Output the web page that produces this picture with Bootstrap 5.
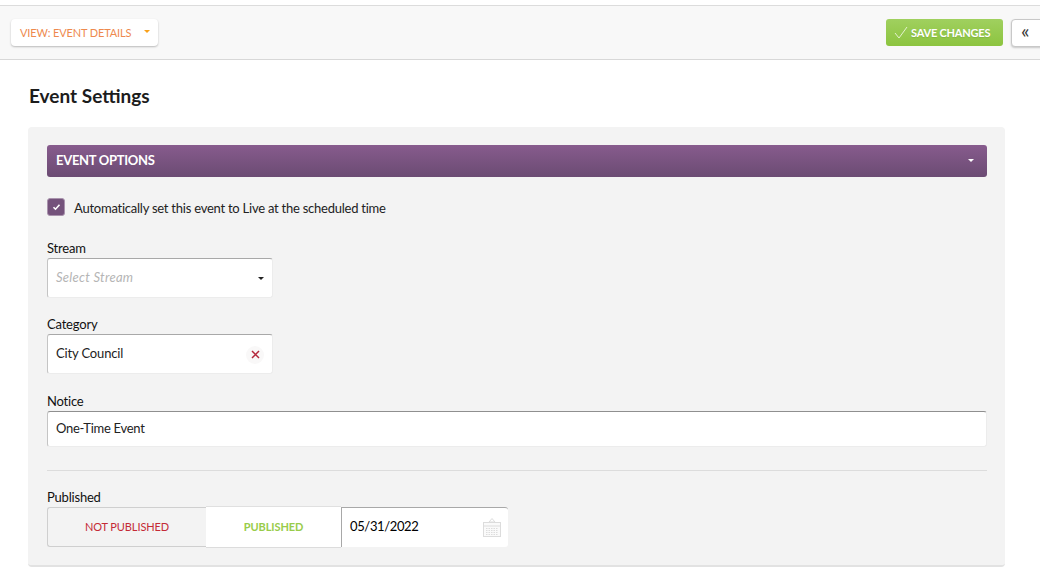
<!DOCTYPE html>
<html lang="en">
<head>
  <meta charset="UTF-8" />
  <meta name="viewport" content="width=device-width, initial-scale=1.0" />
  <title>Event Settings</title>
  <link rel="stylesheet" href="https://cdn.jsdelivr.net/npm/bootstrap@5.3.3/dist/css/bootstrap.min.css" />
  <style>
    body { font-family: Lato, "Liberation Sans", sans-serif; font-size: 13px; letter-spacing: -.2px; color: #222; background: #fff; overflow: hidden; }

    /* toolbar */
    .top-bar { margin-top: 5px; height: 55px; background: #f8f8f8; border-top: 1px solid #dcdcdc; border-bottom: 1px solid #d8d8d8; padding-left: 11px; overflow: hidden; white-space: nowrap; }
    .view-btn { width: 147px; height: 27px; background: #fff; border-radius: 4px; box-shadow: 0 1px 2px rgba(0,0,0,.25); color: #ee8a4e; font-size: 11px; letter-spacing: -.13px; padding: 2px 9px 0; }
    .caret-down { width: 0; height: 0; border-left: 3.5px solid transparent; border-right: 3.5px solid transparent; border-top: 3.5px solid #222; }
    .view-btn .caret-down { border-top-color: #f9a11b; margin-top: -4px; margin-right: -1px; }
    .save-btn { width: 117px; height: 27px; background: linear-gradient(#a0d05f, #8cc43f); border-radius: 3px; color: #fff; font-size: 11px; font-weight: 700; letter-spacing: -.2px; padding: 2px 8px 0; text-shadow: 0 1px 1px rgba(0,0,0,.1); }
    .save-btn svg { margin-top: -2px; margin-right: 3px !important; }
    .collapse-btn { width: 40px; height: 28px; margin-left: 8px; margin-right: -11px; flex-shrink: 0; background: #fff; border: 1px solid #c8c8c8; border-radius: 4px; box-shadow: 0 1px 2px rgba(0,0,0,.2); padding: 0 0 5px 9px; color: #333; font-size: 20px; line-height: 1; }

    /* content */
    .page-title { font-size: 19px; font-weight: 700; color: #1c1c1c; letter-spacing: 0; margin: 0; padding: 23px 0 0 29px; line-height: 25px; height: 67px; }
    .settings-box { margin-left: 28px; width: 977px; height: 440px; background: #f3f3f3; border-radius: 4px; border-bottom: 2px solid #e2e2e2; padding: 18px 18px 0 19px; }
    .options-head { height: 32px; background: linear-gradient(#875b8d, #6b4b73); border-radius: 3px; color: #fff; font-size: 13px; font-weight: 700; letter-spacing: -.3px; padding: 0 13px 0 9px; }
    .options-head .caret-down { border-top-color: #fff; margin-top: -2px; }
    .auto-row { height: 18px; margin-top: 21px; letter-spacing: -.24px; }
    .auto-text { margin-top: 4px; }
    .check-box { width: 18px; height: 18px; background: #74527b; border: 1px solid #a993ad; border-radius: 3px; margin-right: 9px; }
    .field-label { display: block; color: #111; line-height: 17px; padding-top: 1px; margin: 0 0 1px; }
    .fake-input { background: #fff; border: 1px solid #ececec; border-top-color: #a8a8a8; border-left-color: #c4c4c4; border-radius: 3px; padding: 0 8px; }
    .narrow-field { width: 226px; height: 40px; }
    .stream-wrap { margin-top: 23px; }
    .category-wrap { margin-top: 17px; }
    .notice-wrap { margin-top: 18px; }
    .placeholder-text { color: #b5b5b5; font-style: italic; letter-spacing: .28px; }
    .clear-x { width: 18px; height: 18px; border-radius: 50%; background: #f9f8f8; margin-top: 1px; }
    .city-text { margin-top: -1px; letter-spacing: -.15px; }
    .notice-input { height: 36px; border-top-color: #8f8f8f; }
    .notice-text { letter-spacing: -.28px; }
    .divider-line { height: 1px; background: #dcdcdc; margin: 23px 0 0; }
    .published-wrap { margin-top: 17px; }
    .pub-group { height: 40px; font-size: 11px; }
    .pub-off { width: 159px; background: #f3f3f3; border: 1px solid #cfcfcf; border-right: 0; border-radius: 3px 0 0 3px; color: #c42a36; letter-spacing: -.1px; }
    .pub-on { width: 135px; margin: -1px 0; background: #fff; border-top: 1px solid #e0e0e0; border-bottom: 1px solid #dcdcdc; color: #98cc4a; font-weight: 700; letter-spacing: -.1px; }
    .pub-date { width: 167px; background: #fff; border-left: 1px solid #a8a8a8; border-top: 1px solid #a8a8a8; border-radius: 0 3px 3px 0; padding: 0 7px 0 8px; font-size: 13px; letter-spacing: -.36px; color: #000; }
    .pub-date span { margin-top: -2px; }
  </style>
</head>
<body>
  <!-- toolbar -->
  <div class="top-bar d-flex align-items-center">
    <div class="view-btn d-flex align-items-center justify-content-between">
      <span>VIEW: EVENT DETAILS</span>
      <span class="caret-down"></span>
    </div>
    <div class="save-btn d-flex align-items-center ms-auto">
      <svg width="14" height="13" viewBox="0 0 14 13" class="me-1 flex-shrink-0"><path d="M1 7l4 5L13 1" fill="none" stroke="#e4f2cf" stroke-width="1"/></svg>
      <span>SAVE CHANGES</span>
    </div>
    <div class="collapse-btn d-flex align-items-center">«</div>
  </div>

  <h1 class="page-title">Event Settings</h1>

  <div class="settings-box">
    <div class="options-head d-flex align-items-center justify-content-between">
      <span>EVENT OPTIONS</span>
      <span class="caret-down"></span>
    </div>

    <div class="auto-row d-flex align-items-center">
      <span class="check-box d-flex align-items-center justify-content-center">
        <svg width="9" height="8" viewBox="0 0 9 8"><path d="M1.5 4.2l2 2 4-4.5" fill="none" stroke="#fff" stroke-width="1.6"/></svg>
      </span>
      <span class="auto-text">Automatically set this event to Live at the scheduled time</span>
    </div>

    <div class="stream-wrap">
      <label class="field-label">Stream</label>
      <div class="fake-input narrow-field d-flex align-items-center justify-content-between">
        <span class="placeholder-text">Select Stream</span>
        <span class="caret-down"></span>
      </div>
    </div>

    <div class="category-wrap">
      <label class="field-label">Category</label>
      <div class="fake-input narrow-field d-flex align-items-center justify-content-between">
        <span class="city-text">City Council</span>
        <span class="clear-x d-flex align-items-center justify-content-center">
          <svg width="9" height="9" viewBox="0 0 9 9"><path d="M1 1l7 7M8 1L1 8" stroke="#b4283c" stroke-width="1.5"/></svg>
        </span>
      </div>
    </div>

    <div class="notice-wrap">
      <label class="field-label">Notice</label>
      <div class="fake-input notice-input d-flex align-items-center"><span class="notice-text">One-Time Event</span></div>
    </div>

    <div class="divider-line"></div>

    <div class="published-wrap">
      <label class="field-label">Published</label>
      <div class="pub-group d-flex">
        <div class="pub-off d-flex align-items-center justify-content-center">NOT PUBLISHED</div>
        <div class="pub-on d-flex align-items-center justify-content-center">PUBLISHED</div>
        <div class="pub-date d-flex align-items-center justify-content-between">
          <span>05/31/2022</span>
          <svg width="18" height="19" viewBox="0 0 18 19">
            <path d="M9 .5L6 4h6z" fill="none" stroke="#dcdcdc"/>
            <rect x=".5" y="4.5" width="17" height="14" fill="#fafafa" stroke="#dcdcdc"/>
            <path d="M1 8h16" stroke="#dcdcdc"/>
            <path d="M3 10.5h12M3 12.5h12M3 14.5h12M3 16.5h12" stroke="#dcdcdc" stroke-dasharray="1.5 1"/>
          </svg>
        </div>
      </div>
    </div>
  </div>

  <script src="https://cdn.jsdelivr.net/npm/bootstrap@5.3.3/dist/js/bootstrap.bundle.min.js"></script>
</body>
</html>
